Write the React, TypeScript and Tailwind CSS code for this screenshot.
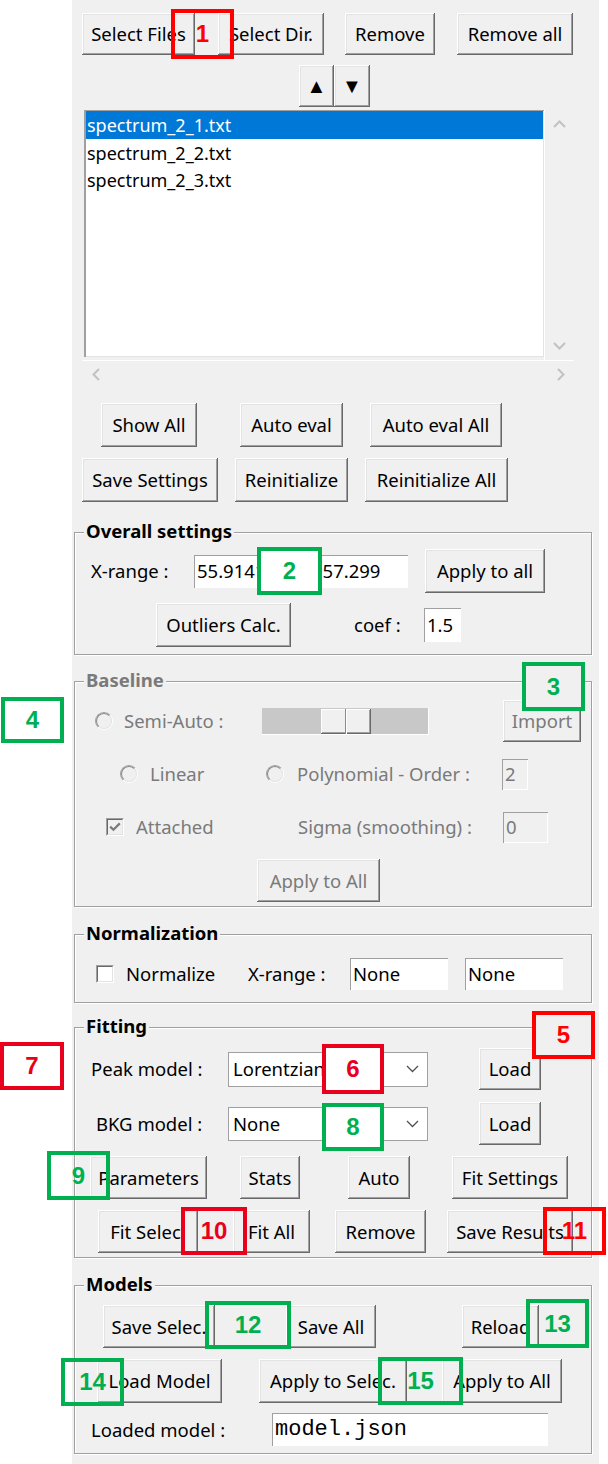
import React from "react";

const BTN =
  "flex items-center justify-center shrink-0 whitespace-nowrap overflow-hidden bg-[#f0f0f0] shadow-[inset_-1px_-1px_0_#696969,inset_1px_1px_0_#ffffff,inset_-2px_-2px_0_#a0a0a0,inset_2px_2px_0_#e3e3e3]";

function Btn({ className = "", children, dim = false }: { className?: string; children: React.ReactNode; dim?: boolean }) {
  return <div className={`${BTN} ${dim ? "text-[#7a7a7a]" : "text-black"} ${className}`}>{children}</div>;
}

function Entry({ className = "", children, dim = false }: { className?: string; children?: React.ReactNode; dim?: boolean }) {
  return (
    <div
      className={`flex items-center shrink-0 overflow-hidden whitespace-nowrap pl-[3px] ${
        dim
          ? "bg-[#f0f0f0] text-[#7a7a7a] shadow-[inset_1px_1px_0_#a0a0a0,inset_-1px_-1px_0_#ffffff]"
          : "bg-white text-black shadow-[inset_1px_1px_0_#a0a0a0]"
      } ${className}`}
    >
      {children}
    </div>
  );
}

function Frame({ title, className = "", children, dim = false }: { title: string; className?: string; children: React.ReactNode; dim?: boolean }) {
  return (
    <div className={`relative ml-[2px] w-[518px] shrink-0 border border-[#a0a0a0] shadow-[inset_1px_1px_0_#ffffff,1px_1px_0_#ffffff] ${className}`}>
      <div className={`absolute left-[9px] top-[-14px] px-[2px] bg-[#f0f0f0] font-bold leading-[24px] ${dim ? "text-[#7a7a7a]" : "text-black"}`}>
        {title}
      </div>
      {children}
    </div>
  );
}

function Radio({ className = "" }: { className?: string }) {
  return (
    <div className={`w-[18px] h-[18px] shrink-0 rounded-full border border-t-[#a0a0a0] border-l-[#a0a0a0] border-r-white border-b-white ${className}`}>
      <div className="w-full h-full rounded-full border border-t-[#8a8a8a] border-l-[#8a8a8a] border-r-[#e3e3e3] border-b-[#e3e3e3] bg-[#f0f0f0]" />
    </div>
  );
}

function Check({ className = "", checked = false, dim = false }: { className?: string; checked?: boolean; dim?: boolean }) {
  return (
    <div className={`w-[18px] h-[18px] shrink-0 border border-t-[#a0a0a0] border-l-[#a0a0a0] border-r-white border-b-white ${className}`}>
      <div
        className={`w-full h-full flex items-center justify-center border border-t-[#696969] border-l-[#696969] border-r-[#e3e3e3] border-b-[#e3e3e3] ${
          dim ? "bg-[#f0f0f0]" : "bg-white"
        }`}
      >
        {checked && (
          <svg width="12" height="10" viewBox="0 0 12 10">
            <path d="M1.2 4.6 L4.4 7.8 L10.8 1.4" fill="none" stroke="#7a7a7a" strokeWidth="2.2" />
          </svg>
        )}
      </div>
    </div>
  );
}

function Combo({ className = "", children }: { className?: string; children: React.ReactNode }) {
  return (
    <div className={`flex items-center shrink-0 bg-white border border-[#a0a0a0] pl-[4px] pr-[8px] ${className}`}>
      <span className="flex-1 whitespace-nowrap overflow-hidden">{children}</span>
      <svg width="13" height="8" viewBox="0 0 13 8">
        <polyline points="1,1 6.5,6.5 12,1" fill="none" stroke="#505050" strokeWidth="1.3" />
      </svg>
    </div>
  );
}

function Chev({ dir }: { dir: "up" | "down" | "left" | "right" }) {
  if (dir === "up")
    return (
      <svg width="13" height="8" viewBox="0 0 13 8">
        <polyline points="1,7 6.5,1.5 12,7" fill="none" stroke="#c2c2c2" strokeWidth="2" />
      </svg>
    );
  if (dir === "down")
    return (
      <svg width="13" height="8" viewBox="0 0 13 8">
        <polyline points="1,1 6.5,6.5 12,1" fill="none" stroke="#c2c2c2" strokeWidth="2" />
      </svg>
    );
  if (dir === "left")
    return (
      <svg width="8" height="13" viewBox="0 0 8 13">
        <polyline points="7,1 1.5,6.5 7,12" fill="none" stroke="#c2c2c2" strokeWidth="2" />
      </svg>
    );
  return (
    <svg width="8" height="13" viewBox="0 0 8 13">
      <polyline points="1,1 6.5,6.5 1,12" fill="none" stroke="#c2c2c2" strokeWidth="2" />
    </svg>
  );
}

const ANN = "absolute border-4 flex items-center justify-center font-bold text-[24px] leading-none font-['Liberation_Sans',Arial,sans-serif]";
const GREEN = "border-[#00b050] text-[#00b050]";
const RED = "border-[#ff0000] text-[#ff0000]";
const DRED = "border-[#e8001c] text-[#e8001c]";

export default function App() {
  return (
    <div className="relative w-[608px] h-[1464px] bg-white overflow-hidden font-['Noto_Sans','Open_Sans',sans-serif] text-[18.5px] leading-[24px] text-black">
      <div className="ml-[72px] w-[527px] h-[1464px] bg-[#f0f0f0] flex flex-col">
        {/* Top buttons */}
        <div className="flex mt-[13px] h-[42px]">
          <Btn className="ml-[10px] w-[113px] h-[42px]">Select Files</Btn>
          <Btn className="ml-[23px] w-[106px] h-[42px]">Select Dir.</Btn>
          <Btn className="ml-[21px] w-[90px] h-[42px]">Remove</Btn>
          <Btn className="ml-[22px] w-[116px] h-[42px]">Remove all</Btn>
        </div>
        <div className="flex mt-[10px] h-[42px]">
          <Btn className="ml-[227px] w-[35px] h-[42px] text-[20px]">▲</Btn>
          <Btn className="w-[36px] h-[42px] text-[20px]">▼</Btn>
        </div>

        {/* Listbox */}
        <div className="ml-[10px] mt-[3px] w-[492px] flex flex-col">
          <div className="flex items-start h-[250px]">
            <div className="ml-[2px] w-[460px] h-[247px] bg-white shadow-[inset_2px_1px_0_#a0a0a0,inset_-1px_-1px_0_#e3e3e3] pt-[1px] pl-[2px] pr-[1px] text-[18px]">
              <div className="h-[28px] flex items-center bg-[#0078d7] text-white pl-[1px]">spectrum_2_1.txt</div>
              <div className="h-[27px] flex items-center pl-[1px]">spectrum_2_2.txt</div>
              <div className="h-[27px] flex items-center pl-[1px]">spectrum_2_3.txt</div>
            </div>
            <div className="w-[30px] h-[250px] border-l border-white flex flex-col items-center justify-between py-[10px]">
              <Chev dir="up" />
              <Chev dir="down" />
            </div>
          </div>
          <div className="h-[28px] border-t border-white flex items-center justify-between pl-[10px] pr-[9px]">
            <Chev dir="left" />
            <Chev dir="right" />
          </div>
        </div>

        <div className="flex mt-[15px] h-[44px]">
          <Btn className="ml-[29px] w-[96px] h-[44px]">Show All</Btn>
          <Btn className="ml-[43px] w-[103px] h-[44px]">Auto eval</Btn>
          <Btn className="ml-[27px] w-[132px] h-[44px]">Auto eval All</Btn>
        </div>
        <div className="flex mt-[11px] h-[44px]">
          <Btn className="ml-[10px] w-[136px] h-[44px]">Save Settings</Btn>
          <Btn className="ml-[17px] w-[113px] h-[44px]">Reinitialize</Btn>
          <Btn className="ml-[17px] w-[143px] h-[44px]">Reinitialize All</Btn>
        </div>

        {/* Overall settings */}
        <Frame title="Overall settings" className="mt-[30px] h-[123px]">
          <div className="flex items-center mt-[16px] h-[44px]">
            <span className="ml-[16px] w-[103px] shrink-0">X-range :</span>
            <Entry className="w-[96px] h-[33px]">55.9141</Entry>
            <Entry className="ml-[19px] w-[99px] h-[33px]">957.299</Entry>
            <Btn className="ml-[17px] w-[120px] h-[44px]">Apply to all</Btn>
          </div>
          <div className="flex items-center mt-[10px] h-[44px]">
            <Btn className="ml-[81px] w-[135px] h-[44px]">Outliers Calc.</Btn>
            <span className="ml-[63px] w-[70px] shrink-0">coef :</span>
            <Entry className="w-[37px] h-[34px]">1.5</Entry>
          </div>
        </Frame>

        {/* Baseline */}
        <Frame title="Baseline" dim className="mt-[26px] h-[226px] text-[#7a7a7a]">
          <div className="flex items-center mt-[18px] h-[42px]">
            <Radio className="ml-[20px]" />
            <span className="ml-[11px] w-[138px] shrink-0">Semi-Auto :</span>
            <div className="w-[167px] h-[27px] shrink-0 bg-[#c8c8c8] shadow-[inset_-1px_-1px_0_#ffffff] flex items-center">
              <div className="ml-[59px] w-[50px] h-[25px] flex bg-[#f0f0f0] shadow-[inset_-1px_-1px_0_#696969,inset_1px_1px_0_#ffffff,inset_-2px_-2px_0_#a0a0a0]">
                <div className="ml-[24px] w-[1px] h-full bg-[#8a8a8a]" />
                <div className="w-[1px] h-full bg-white" />
              </div>
            </div>
            <Btn dim className="ml-[74px] w-[78px] h-[42px]">Import</Btn>
          </div>
          <div className="flex items-center mt-[16px] h-[32px]">
            <Radio className="ml-[45px]" />
            <span className="ml-[12px] w-[116px] shrink-0">Linear</span>
            <Radio />
            <span className="ml-[13px] w-[205px] shrink-0">Polynomial - Order :</span>
            <Entry dim className="w-[26px] h-[31px]">2</Entry>
          </div>
          <div className="flex items-center mt-[20px] h-[34px]">
            <Check checked dim className="ml-[31px]" />
            <span className="ml-[12px] w-[162px] shrink-0">Attached</span>
            <span className="w-[205px] shrink-0">Sigma (smoothing) :</span>
            <Entry dim className="w-[45px] h-[31px]">0</Entry>
          </div>
          <div className="flex mt-[15px] h-[43px]">
            <Btn dim className="ml-[182px] w-[123px] h-[43px]">Apply to All</Btn>
          </div>
        </Frame>

        {/* Normalization */}
        <Frame title="Normalization" className="mt-[27px] h-[69px]">
          <div className="flex items-center mt-[23px] h-[32px]">
            <Check className="ml-[21px]" />
            <span className="ml-[12px] w-[122px] shrink-0">Normalize</span>
            <span className="w-[102px] shrink-0">X-range :</span>
            <Entry className="w-[98px] h-[32px]">None</Entry>
            <Entry className="ml-[17px] w-[98px] h-[32px]">None</Entry>
          </div>
        </Frame>

        {/* Fitting */}
        <Frame title="Fitting" className="mt-[24px] h-[231px]">
          <div className="flex items-center mt-[20px] h-[42px]">
            <span className="ml-[16px] w-[137px] shrink-0">Peak model :</span>
            <Combo className="w-[200px] h-[35px]">Lorentzian</Combo>
            <Btn className="ml-[51px] w-[62px] h-[42px]">Load</Btn>
          </div>
          <div className="flex items-center mt-[12px] h-[43px]">
            <span className="ml-[21px] w-[132px] shrink-0">BKG model :</span>
            <Combo className="w-[200px] h-[34px]">None</Combo>
            <Btn className="ml-[51px] w-[62px] h-[43px]">Load</Btn>
          </div>
          <div className="flex mt-[11px] h-[43px]">
            <Btn className="ml-[15px] w-[117px] h-[43px]">Parameters</Btn>
            <Btn className="ml-[33px] w-[60px] h-[43px]">Stats</Btn>
            <Btn className="ml-[48px] w-[62px] h-[43px]">Auto</Btn>
            <Btn className="ml-[42px] w-[116px] h-[43px]">Fit Settings</Btn>
          </div>
          <div className="flex mt-[11px] h-[43px]">
            <Btn className="ml-[23px] w-[100px] h-[43px]">Fit Selec.</Btn>
            <Btn className="ml-[35px] w-[77px] h-[43px]">Fit All</Btn>
            <Btn className="ml-[25px] w-[91px] h-[43px]">Remove</Btn>
            <Btn className="ml-[21px] w-[126px] h-[43px]">Save Results</Btn>
          </div>
        </Frame>

        {/* Models */}
        <Frame title="Models" className="mt-[27px] h-[169px]">
          <div className="flex mt-[19px] h-[43px]">
            <Btn className="ml-[28px] w-[112px] h-[43px]">Save Selec.</Btn>
            <Btn className="ml-[71px] w-[90px] h-[43px]">Save All</Btn>
            <Btn className="ml-[86px] w-[77px] h-[43px]">Reload</Btn>
          </div>
          <div className="flex mt-[11px] h-[44px]">
            <Btn className="ml-[22px] w-[125px] h-[44px]">Load Model</Btn>
            <Btn className="ml-[37px] w-[148px] h-[44px]">Apply to Selec.</Btn>
            <Btn className="ml-[35px] w-[120px] h-[44px]">Apply to All</Btn>
          </div>
          <div className="flex items-center mt-[10px] h-[33px]">
            <span className="ml-[16px] w-[181px] shrink-0">Loaded model :</span>
            <Entry className="w-[276px] h-[33px] font-['Liberation_Mono','Courier_New',monospace] text-[22px]">model.json</Entry>
          </div>
        </Frame>
      </div>

      {/* Annotations */}
      <div className={`${ANN} ${RED} left-[171px] top-[9px] w-[63px] h-[50px]`}>1</div>
      <div className={`${ANN} ${GREEN} bg-white left-[257px] top-[547px] w-[65px] h-[48px]`}>2</div>
      <div className={`${ANN} ${GREEN} bg-[#f0f0f0] left-[522px] top-[662px] w-[63px] h-[49px]`}>3</div>
      <div className={`${ANN} ${GREEN} left-[1px] top-[697px] w-[63px] h-[46px]`}>4</div>
      <div className={`${ANN} ${RED} bg-[#f0f0f0] left-[532px] top-[1011px] w-[63px] h-[48px]`}>5</div>
      <div className={`${ANN} ${DRED} bg-white left-[322px] top-[1044px] w-[62px] h-[50px]`}>6</div>
      <div className={`${ANN} ${DRED} left-[0px] top-[1042px] w-[64px] h-[48px]`}>7</div>
      <div className={`${ANN} ${GREEN} bg-white left-[322px] top-[1103px] w-[62px] h-[48px]`}>8</div>
      <div className={`${ANN} ${GREEN} left-[47px] top-[1151px] w-[63px] h-[49px]`}>9</div>
      <div className={`${ANN} ${DRED} left-[181px] top-[1207px] w-[66px] h-[48px]`}>10</div>
      <div className={`${ANN} ${RED} left-[543px] top-[1207px] w-[63px] h-[48px]`}>11</div>
      <div className={`${ANN} ${GREEN} left-[205px] top-[1301px] w-[86px] h-[48px]`}>12</div>
      <div className={`${ANN} ${GREEN} left-[526px] top-[1299px] w-[63px] h-[49px]`}>13</div>
      <div className={`${ANN} ${GREEN} left-[61px] top-[1358px] w-[63px] h-[48px]`}>14</div>
      <div className={`${ANN} ${GREEN} left-[378px] top-[1357px] w-[85px] h-[48px]`}>15</div>
    </div>
  );
}
